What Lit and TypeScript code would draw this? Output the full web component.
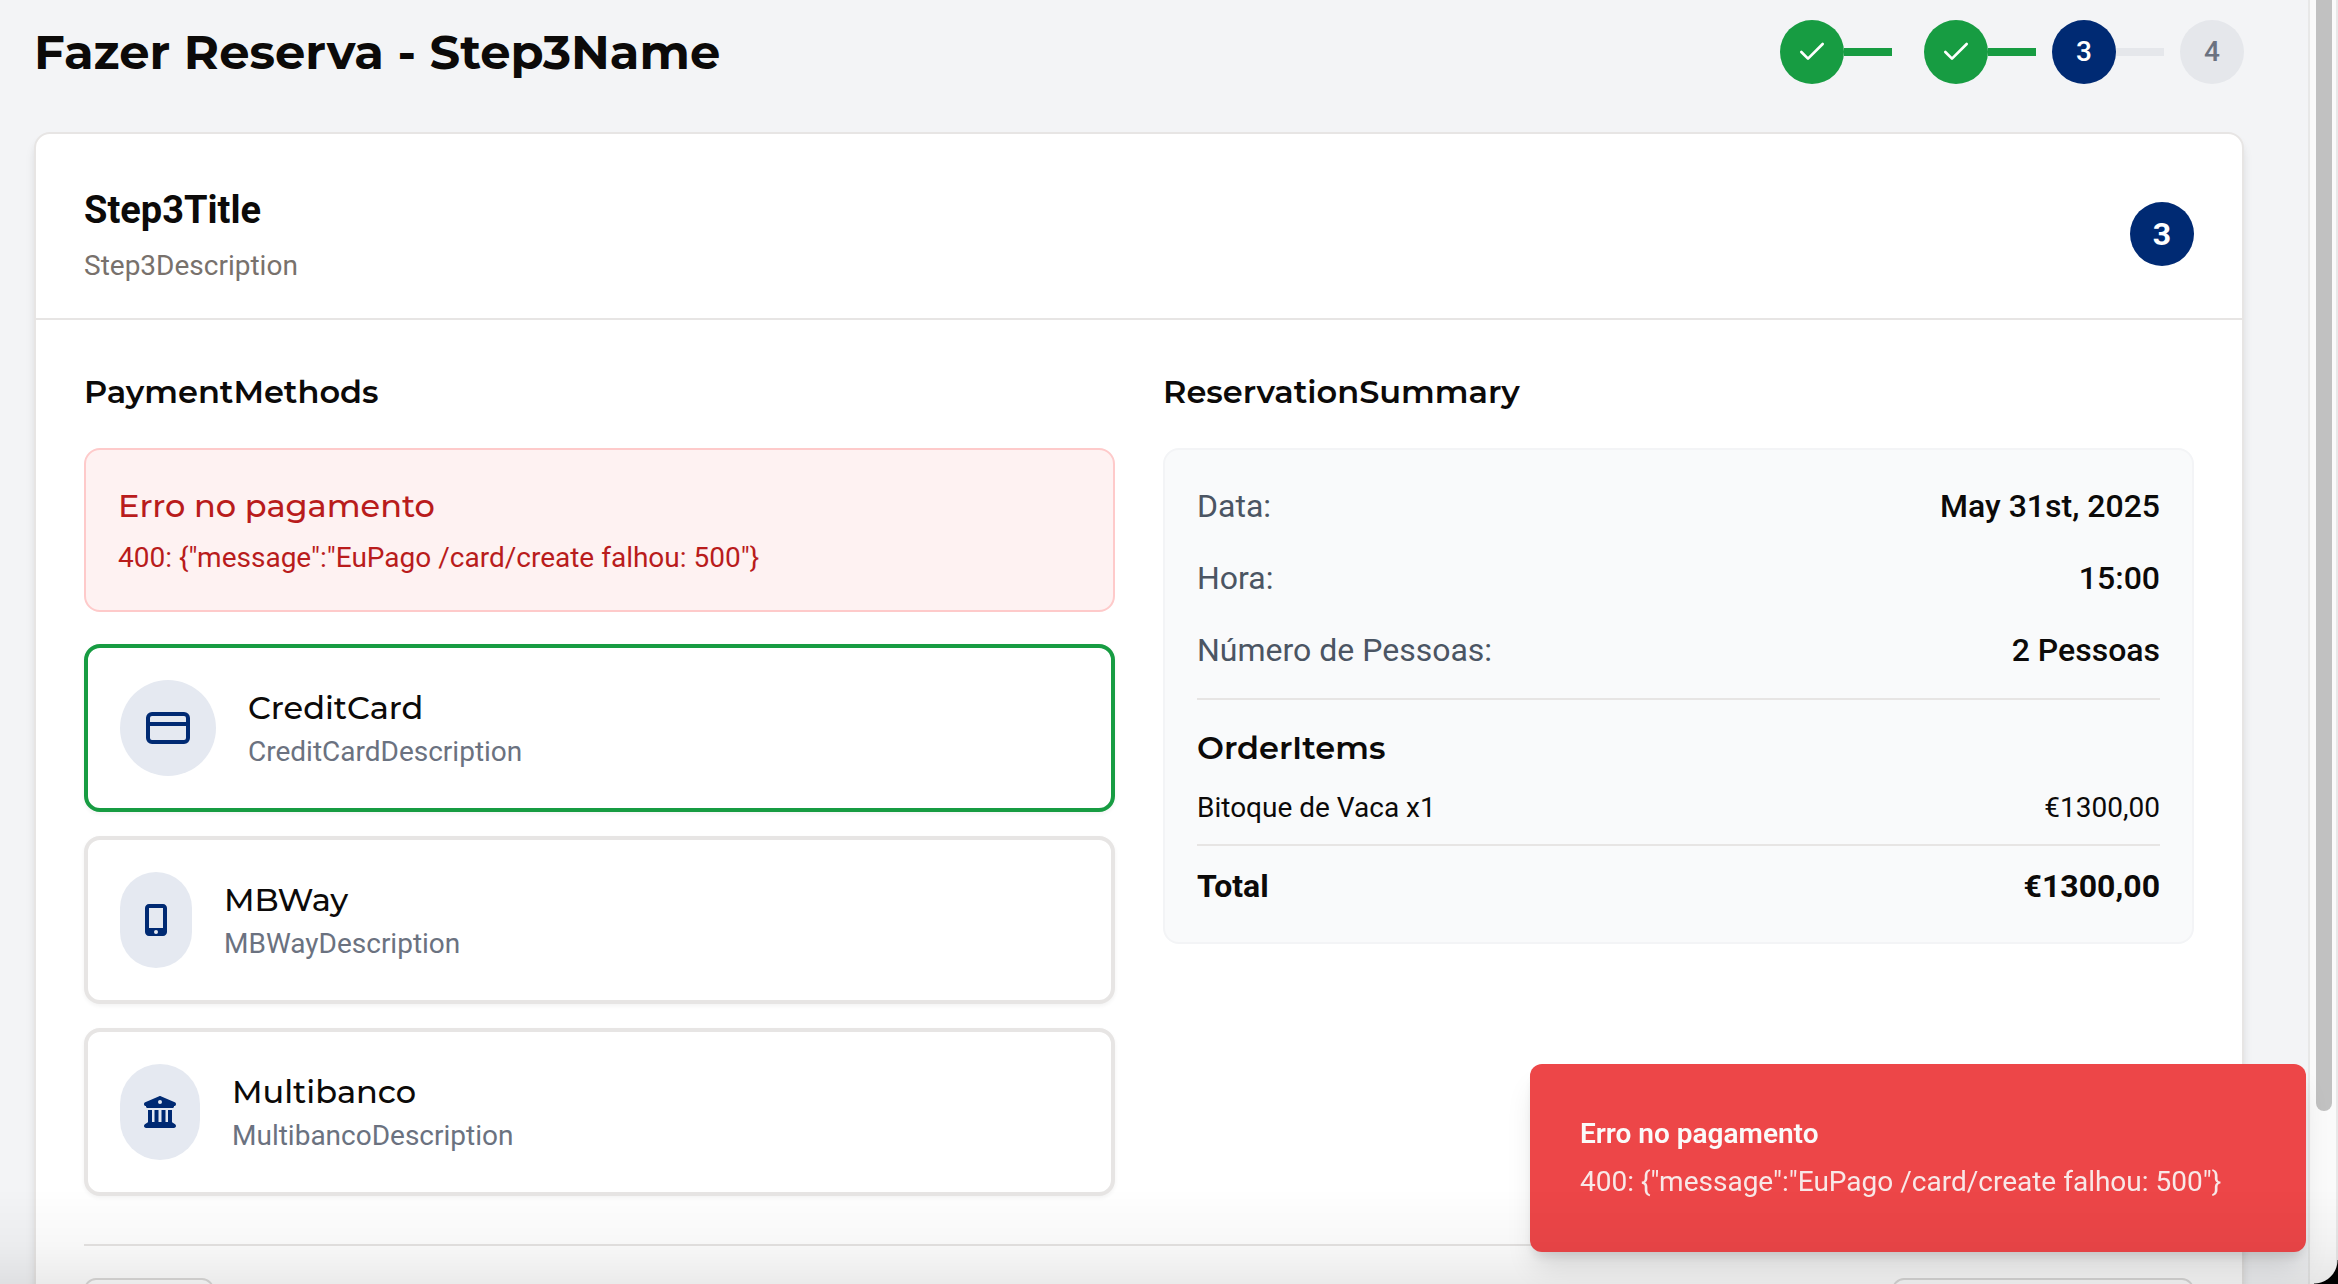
import { LitElement, html, css, nothing } from "lit";
import { customElement, state } from "lit/decorators.js";
import { classMap } from "lit/directives/class-map.js";

const checkIcon = html`<svg class="check" viewBox="0 0 24 24" aria-hidden="true">
  <path d="M20 6 9 17l-5-5" />
</svg>`;

const cardIcon = html`<svg class="icon-card" viewBox="0 0 24 24" aria-hidden="true">
  <rect width="20" height="14" x="2" y="5" rx="2" />
  <line x1="2" x2="22" y1="10" y2="10" />
</svg>`;

const phoneIcon = html`<svg class="icon-phone" viewBox="0 0 384 512" aria-hidden="true">
  <path d="M16 64C16 28.7 44.7 0 80 0L304 0c35.3 0 64 28.7 64 64l0 384c0 35.3-28.7 64-64 64L80 512c-35.3 0-64-28.7-64-64L16 64zM224 448a32 32 0 1 0 -64 0 32 32 0 1 0 64 0zM304 64L80 64l0 320 224 0 0-320z" />
</svg>`;

const bankIcon = html`<svg class="icon-bank" viewBox="0 0 512 512" aria-hidden="true">
  <path d="M243.4 2.6l-224 96c-14 6-21.8 21-18.7 35.8S16.8 160 32 160l0 8c0 13.3 10.7 24 24 24l400 0c13.3 0 24-10.7 24-24l0-8c15.2 0 28.3-10.7 31.3-25.6s-4.8-29.9-18.7-35.8l-224-96c-8-3.4-17.2-3.4-25.2 0zM128 224l-64 0 0 196.3c-.6 .3-1.2 .7-1.8 1.1l-48 32c-11.7 7.8-17 22.4-12.9 35.9S17.9 512 32 512l448 0c14.1 0 26.5-9.2 30.6-22.7s-1.1-28.1-12.9-35.9l-48-32c-.6-.4-1.2-.7-1.8-1.1L448 224l-64 0 0 192-40 0 0-192-64 0 0 192-48 0 0-192-64 0 0 192-40 0 0-192zM256 64a32 32 0 1 1 0 64 32 32 0 1 1 0-64z" />
</svg>`;

const methods = [
  { id: "card", name: "CreditCard", description: "CreditCardDescription", icon: cardIcon },
  { id: "mbway", name: "MBWay", description: "MBWayDescription", icon: phoneIcon },
  { id: "multibanco", name: "Multibanco", description: "MultibancoDescription", icon: bankIcon },
];

const details = [
  { label: "Data:", value: "May 31st, 2025" },
  { label: "Hora:", value: "15:00" },
  { label: "Número de Pessoas:", value: "2 Pessoas" },
];

const errorMessage = '400: {"message":"EuPago /card/create falhou: 500"}';

@customElement("app-root")
export class AppRoot extends LitElement {
  static styles = css`
    :host {
      --navy: #002a73;
      --green: #179c42;
      --line: #e7e5e4;
      display: flex;
      height: 100vh;
      overflow: hidden;
      background: #f3f4f6;
      color: #0c0a09;
      font: 400 28px/40px Roboto, "Liberation Sans", sans-serif;
    }
    * {
      box-sizing: border-box;
      margin: 0;
    }
    h1, h3, h4, .method-name, .error-title {
      font-family: Montserrat, Inter, sans-serif;
      font-size: 32px;
      line-height: 48px;
      font-weight: 600;
    }
    .page {
      flex: 1;
      min-width: 0;
      padding: 20px 64px 0 34px;
    }
    .top {
      display: flex;
      align-items: center;
      justify-content: space-between;
      margin-bottom: 48px;
    }
    h1 {
      font-size: 48px;
      line-height: 64px;
      font-weight: 700;
    }
    .steps {
      display: flex;
      gap: 16px;
      padding: 0;
      list-style: none;
    }
    .step {
      display: flex;
      align-items: center;
    }
    .step.spaced {
      margin-right: 16px;
    }
    .dot {
      display: grid;
      place-items: center;
      width: 64px;
      height: 64px;
      border-radius: 50%;
      background: #e5e7eb;
      color: #6b7280;
      font-weight: 500;
    }
    .dot.done {
      background: var(--green);
      color: #fff;
    }
    .dot.current {
      background: var(--navy);
      color: #fff;
    }
    .bar {
      width: 48px;
      height: 8px;
      background: #e5e7eb;
    }
    .bar.done {
      background: var(--green);
    }
    svg {
      display: block;
      fill: currentColor;
    }
    .check, .icon-card {
      fill: none;
      stroke: currentColor;
      stroke-width: 2;
      stroke-linecap: round;
      stroke-linejoin: round;
    }
    .check, .icon-bank {
      width: 32px;
      height: 32px;
    }
    .icon-card {
      width: 48px;
      height: 48px;
    }
    .icon-phone {
      width: 24px;
      height: 32px;
    }
    .panel {
      border: 2px solid var(--line);
      border-radius: 16px;
      background: #fff;
      box-shadow: 0 8px 12px -2px rgb(0 0 0 / 0.1), 0 4px 8px -4px rgb(0 0 0 / 0.1);
    }
    .panel-head {
      display: flex;
      align-items: center;
      justify-content: space-between;
      padding: 48px 48px 32px;
      border-bottom: 2px solid var(--line);
    }
    .panel-head h2 {
      margin-bottom: 8px;
      font-size: 38px;
      line-height: 56px;
      font-weight: 700;
    }
    .muted {
      color: #78716c;
    }
    .badge {
      display: grid;
      place-items: center;
      width: 64px;
      height: 64px;
      border-radius: 50%;
      background: var(--navy);
      color: #fff;
      font-size: 32px;
      font-weight: 700;
    }
    .panel-body {
      padding: 48px;
    }
    .columns {
      display: grid;
      grid-template-columns: 1fr 1fr;
      gap: 48px;
      align-items: start;
    }
    h3 {
      margin-bottom: 32px;
    }
    .error {
      margin-bottom: 32px;
      padding: 32px;
      border: 2px solid #fecaca;
      border-radius: 16px;
      background: #fef2f2;
      color: #b91c1c;
    }
    .error-title {
      margin-bottom: 8px;
      font-weight: 500;
    }
    .methods {
      display: grid;
      gap: 24px;
    }
    .method {
      display: flex;
      align-items: center;
      gap: 32px;
      padding: 32px;
      border: 4px solid var(--line);
      border-radius: 16px;
      background: #fff;
      box-shadow: 0 2px 4px rgb(0 0 0 / 0.05);
      color: inherit;
      font: inherit;
      text-align: left;
      cursor: pointer;
    }
    .method.selected {
      border-color: var(--green);
    }
    .method-icon {
      display: grid;
      place-items: center;
      height: 96px;
      padding: 0 24px;
      border-radius: 48px;
      background: #e5e9f1;
      color: var(--navy);
    }
    .method-text, .method-name, .method-note {
      display: block;
    }
    .method-name {
      font-weight: 500;
    }
    .method-note {
      color: #6b7280;
    }
    .summary {
      display: grid;
      gap: 24px;
      padding: 32px;
      border: 2px solid #f3f4f6;
      border-radius: 16px;
      background: #f9fafb;
    }
    .row {
      display: flex;
      justify-content: space-between;
    }
    .details {
      display: grid;
      gap: 24px;
      font-size: 32px;
      line-height: 48px;
    }
    .details dt {
      color: #4b5563;
    }
    .details dd {
      font-weight: 500;
    }
    .order {
      display: grid;
      gap: 16px;
      padding-top: 24px;
      border-top: 2px solid var(--line);
    }
    .total {
      padding-top: 16px;
      border-top: 2px solid var(--line);
      font-size: 32px;
      line-height: 48px;
      font-weight: 700;
    }
    .actions {
      display: flex;
      justify-content: space-between;
      margin-top: 48px;
      padding-top: 32px;
      border-top: 2px solid var(--line);
    }
    .action {
      width: 130px;
      height: 80px;
      border: 2px solid #dddcdb;
      border-radius: 12px;
      background: #fff;
    }
    .action.wide {
      width: 302px;
    }
    .scroll {
      width: 30px;
      padding: 0 4px 0 6px;
      border: solid #e8e8e8;
      border-width: 0 2px;
      background: #fafafa;
    }
    .thumb {
      width: 16px;
      height: 1111px;
      border-radius: 0 0 8px 8px;
      background: #c1c1c1;
    }
    .toast {
      position: fixed;
      right: 32px;
      bottom: 32px;
      width: 776px;
      padding: 50px;
      border-radius: 12px;
      background: #ed4648;
      box-shadow: 0 20px 30px -6px rgb(0 0 0 / 0.12), 0 8px 12px -4px rgb(0 0 0 / 0.12);
      color: #fafaf9;
    }
    .toast-title {
      margin-bottom: 8px;
      font-weight: 600;
    }
    .toast-text {
      opacity: 0.9;
    }
    .fade {
      position: fixed;
      inset: auto 0 0 0;
      height: 96px;
      background:
        radial-gradient(circle at 0 0, transparent 23px, #000 24px) right bottom / 24px 24px no-repeat,
        linear-gradient(rgb(0 0 0 / 0), rgb(0 0 0 / 0.03) 60%, rgb(0 0 0 / 0.08));
      pointer-events: none;
    }
  `;

  @state() private selected = "card";
  private readonly current = 3;

  private renderStep(n: number) {
    const done = n < this.current;
    return html`<li class=${classMap({ step: true, spaced: n === 1 })}>
      <span class=${classMap({ dot: true, done, current: n === this.current })}>${done ? checkIcon : n}</span>
      ${n < 4 ? html`<span class=${classMap({ bar: true, done })}></span>` : nothing}
    </li>`;
  }

  render() {
    return html`
      <main class="page">
        <header class="top">
          <h1>Fazer Reserva - Step3Name</h1>
          <ol class="steps">${[1, 2, 3, 4].map((n) => this.renderStep(n))}</ol>
        </header>
        <section class="panel">
          <div class="panel-head">
            <div>
              <h2>Step3Title</h2>
              <p class="muted">Step3Description</p>
            </div>
            <span class="badge">3</span>
          </div>
          <div class="panel-body">
            <div class="columns">
              <div>
                <h3>PaymentMethods</h3>
                <div class="error" role="alert">
                  <p class="error-title">Erro no pagamento</p>
                  <p>${errorMessage}</p>
                </div>
                <div class="methods">
                  ${methods.map(
                    (m) => html`<button
                      type="button"
                      class=${classMap({ method: true, selected: m.id === this.selected })}
                      aria-pressed=${m.id === this.selected ? "true" : "false"}
                      @click=${() => (this.selected = m.id)}
                    >
                      <span class="method-icon">${m.icon}</span>
                      <span class="method-text">
                        <span class="method-name">${m.name}</span>
                        <span class="method-note">${m.description}</span>
                      </span>
                    </button>`
                  )}
                </div>
              </div>
              <div>
                <h3>ReservationSummary</h3>
                <div class="summary">
                  <dl class="details">
                    ${details.map((d) => html`<div class="row"><dt>${d.label}</dt><dd>${d.value}</dd></div>`)}
                  </dl>
                  <div class="order">
                    <h4>OrderItems</h4>
                    <div class="row"><span>Bitoque de Vaca x1</span><span>€1300,00</span></div>
                    <div class="row total"><span>Total</span><span>€1300,00</span></div>
                  </div>
                </div>
              </div>
            </div>
            <div class="actions">
              <button type="button" class="action" aria-label="Voltar"></button>
              <button type="button" class="action wide" aria-label="Continuar"></button>
            </div>
          </div>
        </section>
      </main>
      <div class="scroll" aria-hidden="true"><div class="thumb"></div></div>
      <div class="toast" role="status">
        <p class="toast-title">Erro no pagamento</p>
        <p class="toast-text">${errorMessage}</p>
      </div>
      <div class="fade"></div>
    `;
  }
}
